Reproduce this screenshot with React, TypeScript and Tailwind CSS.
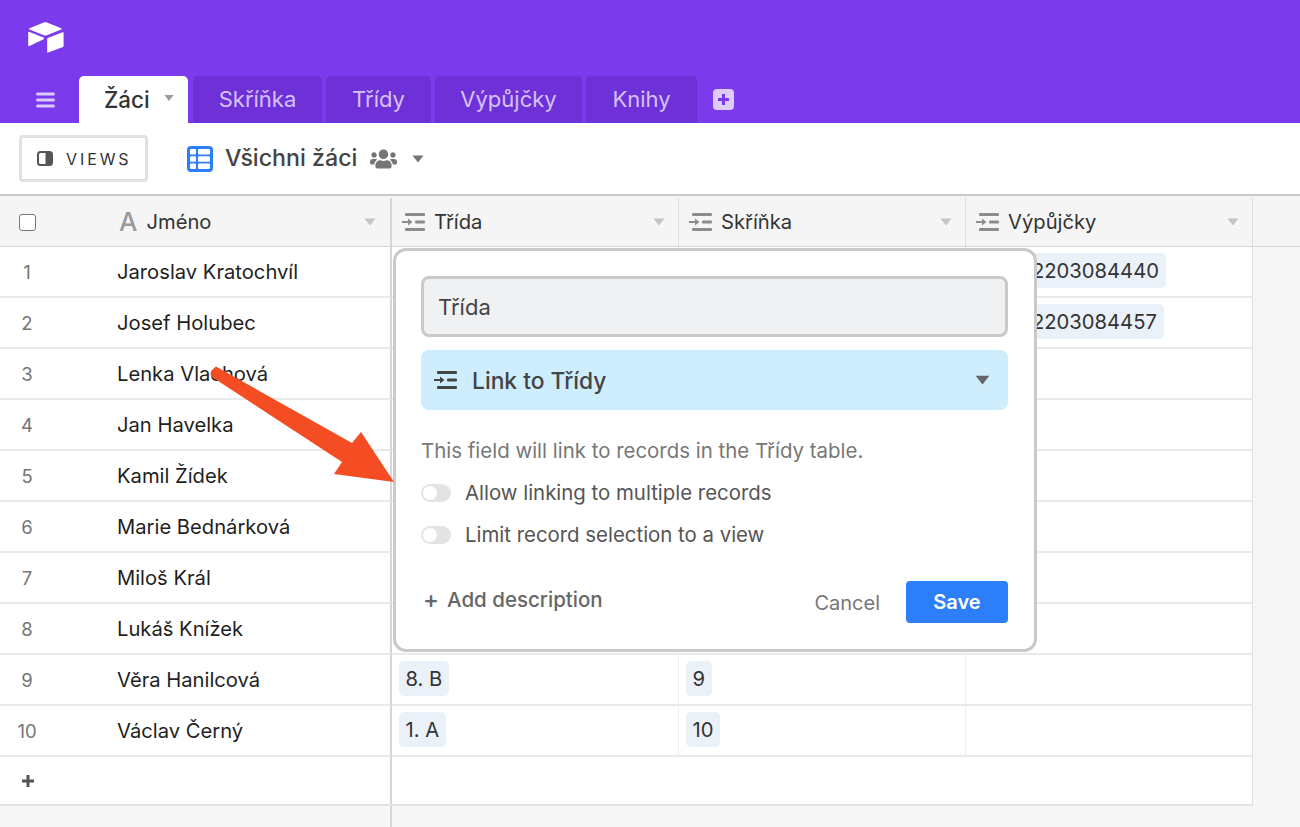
import React from 'react';
import { FaUsers } from 'react-icons/fa';

const students = [
  'Jaroslav Kratochvíl',
  'Josef Holubec',
  'Lenka Vlachová',
  'Jan Havelka',
  'Kamil Žídek',
  'Marie Bednárková',
  'Miloš Král',
  'Lukáš Knížek',
  'Věra Hanilcová',
  'Václav Černý',
];

const classes: Record<number, string> = { 8: '8. B', 9: '1. A' };
const lockers: Record<number, string> = { 8: '9', 9: '10' };
const loans: Record<number, string> = { 0: '2203084440', 1: '2203084457' };

const tabs = [
  { name: 'Skříňka', width: 'w-[129px]' },
  { name: 'Třídy', width: 'w-[105px]' },
  { name: 'Výpůjčky', width: 'w-[147px]' },
  { name: 'Knihy', width: 'w-[111px]' },
];

const Caret = ({ className }: { className: string }) => (
  <svg viewBox="0 0 12 8" className={className} fill="currentColor">
    <path d="M0.5 0.5h11L6 7.5z" />
  </svg>
);

const LinkIcon = ({ className }: { className: string }) => (
  <svg viewBox="0 0 24 20" className={className} fill="currentColor">
    <rect x="3" y="1" width="20" height="3" rx="1" />
    <rect x="3" y="16" width="20" height="3" rx="1" />
    <rect x="13" y="8.5" width="10" height="3" rx="1" />
    <path d="M0 9h6V6.5l4.5 3.5L6 13.500V11H0z" />
  </svg>
);

const HeaderCell = ({ label }: { label: string }) => (
  <div className="w-[287px] shrink-0 flex items-center border-r border-[#dedede] pl-[10px] pr-[13px]">
    <LinkIcon className="w-[24px] h-[20px] text-[#8c8c8c]" />
    <span className="ml-[8px] text-[20.200px] text-[#333333]">{label}</span>
    <Caret className="ml-auto w-[12px] h-[8px] text-[#c4c4c4]" />
  </div>
);

const Chip = ({ text }: { text?: string }) =>
  text ? (
    <span className="h-[35px] mb-[2px] pt-[2px] flex items-center px-[6.500px] rounded-[5px] bg-[#eaf1f8] text-[20.200px] text-[#333333]">
      {text}
    </span>
  ) : null;

const Toggle = ({ label }: { label: string }) => (
  <div className="flex items-center h-[24px]">
    <span className="w-[30px] h-[18px] rounded-full bg-[#e3e3e3] p-[2px] flex">
      <span className="w-[14px] h-[14px] rounded-full bg-white" />
    </span>
    <span className="ml-[14px] text-[20.400px] text-[#555555]">{label}</span>
  </div>
);

export default function App() {
  return (
    <div className="relative w-[1300px] h-[827px] overflow-hidden bg-[#f6f6f6] font-['Inter',sans-serif]">
      {/* Header */}
      <div className="h-[123px] bg-[#7c3aed] flex flex-col justify-between">
        <svg viewBox="0 0 37 31" className="w-[37px] h-[31px] mt-[22px] ml-[27px]" fill="white">
          <path d="M16.700 0.500 2.500 6.300c-.6.3-.6 1.100 0 1.300l14.300 5.600c1 .4 2.100.4 3.100 0l14.300-5.600c.6-.3.6-1 0-1.300L19.900.5c-1-.4-2.200-.4-3.200 0z" />
          <path d="M20.200 16.800v13.200c0 .5.500.8 1 .6l14.800-5.700c.4-.2.600-.5.600-.9V10.800c0-.5-.5-.8-1-.6l-14.800 5.700c-.4.200-.6.500-.6.900z" />
          <path d="M16.500 17.300l-4.400 2.100-.4.200-9.200 4.400c-.6.300-1.300-.1-1.300-.8V10.700c0-.2.100-.4.300-.6.100-.1.200-.2.300-.2.200-.1.500-.1.700 0l14 5.500c.7.300.7 1.500 0 1.900z" />
        </svg>
        <div className="flex items-end h-[47px]">
          <div className="w-[79px] h-[47px] flex items-center pl-[36px]">
            <svg viewBox="0 0 19 16" className="w-[19px] h-[16px]" fill="#dccbfb">
              <rect width="19" height="3" y="0.500" rx="1.500" />
              <rect width="19" height="3" y="6.500" rx="1.500" />
              <rect width="19" height="3" y="12.500" rx="1.500" />
            </svg>
          </div>
          <div className="w-[109px] h-[47px] bg-white rounded-t-[5px] flex items-center pl-[25px]">
            <span className="text-[22.400px] font-medium text-[#333333]">Žáci</span>
            <Caret className="ml-[14px] mb-[4px] w-[10px] h-[8px] text-[#9b9b9b]" />
          </div>
          <div className="flex gap-[4px] ml-[5px]">
            {tabs.map((tab) => (
              <div
                key={tab.name}
                className={`${tab.width} h-[47px] bg-[#6e31d8] rounded-t-[5px] flex items-center justify-center text-[22px] text-[#d5c2f9]`}
              >
                {tab.name}
              </div>
            ))}
          </div>
          <div className="h-[47px] flex items-center ml-[16px]">
            <svg viewBox="0 0 21 21" className="w-[21px] h-[21px]">
              <rect width="21" height="21" rx="4" fill="#dccbfb" />
              <path d="M10.500 5v11M5 10.500h11" stroke="#7c3aed" strokeWidth="3" />
            </svg>
          </div>
        </div>
      </div>

      {/* Toolbar */}
      <div className="h-[73px] bg-white border-b-[2px] border-[#c9c9c9] flex items-center pl-[19px]">
        <div className="w-[129px] h-[47px] border-[3px] border-[#e0e2e2] rounded-[4px] flex items-center pl-[15px]">
          <svg viewBox="0 0 16 15" className="w-[16px] h-[15px]">
            <rect x="1" y="1" width="14" height="13" rx="2.500" fill="none" stroke="#555555" strokeWidth="2" />
            <rect x="8.500" y="1" width="6.500" height="13" rx="1.500" fill="#555555" />
          </svg>
          <span className="ml-[13px] text-[16px] tracking-[2.900px] text-[#333333]">VIEWS</span>
        </div>
        <svg viewBox="0 0 26 26" className="w-[26px] h-[26px] ml-[39px]">
          <rect width="26" height="26" rx="4" fill="#2d7ff9" />
          <rect x="3" y="3" width="6" height="5.500" rx="1" fill="white" />
          <rect x="11" y="3" width="12" height="5.500" rx="1" fill="white" />
          <rect x="3" y="10.250" width="6" height="5.500" rx="1" fill="white" />
          <rect x="11" y="10.250" width="12" height="5.500" rx="1" fill="white" />
          <rect x="3" y="17.500" width="6" height="5.500" rx="1" fill="white" />
          <rect x="11" y="17.500" width="12" height="5.500" rx="1" fill="white" />
        </svg>
        <span className="ml-[12px] text-[23.200px] font-medium text-[#444444]">Všichni žáci</span>
        <FaUsers className="ml-[13px] w-[27px] h-[22px] text-[#757575]" />
        <Caret className="ml-[15px] w-[12px] h-[8px] text-[#757575]" />
      </div>

      {/* Table header */}
      <div className="h-[51px] pt-[2px] flex bg-[#f5f5f5] border-b-[1px] border-[#d6d6d6]">
        <div className="w-[392px] shrink-0 flex items-center border-r-[2px] border-[#d6d6d6] pl-[19px] pr-[14px]">
          <span className="w-[17px] h-[17px] rounded-[3px] border-[1px] border-[#777777] bg-white" />
          <span className="ml-[83px] text-[26px] font-medium text-[#9a9a9a] leading-none">A</span>
          <span className="ml-[9px] text-[20.200px] text-[#333333]">Jméno</span>
          <Caret className="ml-auto w-[12px] h-[8px] text-[#c4c4c4]" />
        </div>
        <HeaderCell label="Třída" />
        <HeaderCell label="Skříňka" />
        <HeaderCell label="Výpůjčky" />
      </div>

      {/* Rows */}
      {students.map((name, i) => (
        <div key={name} className="h-[51px] flex">
          <div className="w-[392px] pt-[2px] shrink-0 flex items-center bg-white border-r-[2px] border-[#d6d6d6] border-b-[2px] border-b-[#e8e9e9]">
            <span className="w-[54px] text-center text-[18.500px] text-[#757575]">{i + 1}</span>
            <span className="ml-[63px] text-[20.200px] text-[#1f1f1f]">{name}</span>
          </div>
          <div className="w-[287px] shrink-0 flex items-center bg-white border-r border-[#eeeeee] border-b-[2px] border-b-[#e8e9e9] pl-[7px]">
            <Chip text={classes[i]} />
          </div>
          <div className="w-[287px] shrink-0 flex items-center bg-white border-r border-[#eeeeee] border-b-[2px] border-b-[#e8e9e9] pl-[7px]">
            <Chip text={lockers[i]} />
          </div>
          <div className="w-[287px] shrink-0 flex items-center bg-white border-r border-[#dedede] border-b-[2px] border-b-[#e8e9e9] pl-[6px]">
            {loans[i] && (
              <span className="h-[35px] mb-[2px] pt-[2px] flex items-center pl-[60px] pr-[7px] rounded-[5px] bg-[#eaf1f8] text-[20.200px] text-[#333333]">
                {loans[i]}
              </span>
            )}
          </div>
        </div>
      ))}

      {/* Add row */}
      <div className="h-[49px] w-[1253px] flex bg-white border-b-[2px] border-[#e3e3e3] border-r border-r-[#dedede]">
        <div className="w-[392px] shrink-0 flex items-center border-r-[2px] border-[#d6d6d6] pl-[21px]">
          <svg viewBox="0 0 14 14" className="w-[14px] h-[14px]">
            <path d="M7 1v12M1 7h12" stroke="#555555" strokeWidth="3" />
          </svg>
        </div>
      </div>
      <div className="h-[22px] w-[392px] border-r-[2px] border-[#d6d6d6]" />

      {/* Field editor */}
      <div className="absolute left-[393px] top-[248px] w-[644px] h-[404px] bg-white border-[3px] border-[#c9c9c9] rounded-[13px] pt-[25px] pl-[25px] pr-[26px]">
        <div className="h-[61px] pt-[2px] rounded-[8px] border-[3px] border-[#c9c9c9] bg-[#f0f1f3] flex items-center pl-[14px] text-[22px] text-[#444444]">
          Třída
        </div>
        <div className="mt-[13px] h-[60px] rounded-[8px] bg-[#cfeefd] flex items-center pl-[13px] pr-[18px]">
          <LinkIcon className="w-[24px] h-[20px] text-[#444444]" />
          <span className="ml-[14px] pt-[2px] text-[22.800px] font-medium text-[#444444]">Link to Třídy</span>
          <Caret className="ml-auto w-[15px] h-[10px] text-[#666666]" />
        </div>
        <p className="mt-[27px] text-[20.450px] leading-[27px] text-[#777777]">
          This field will link to records in the Třídy table.
        </p>
        <div className="mt-[17px] flex flex-col gap-[18px]">
          <Toggle label="Allow linking to multiple records" />
          <Toggle label="Limit record selection to a view" />
        </div>
        <div className="mt-[34px] flex items-center">
          <span className="ml-[2px] text-[24px] font-medium text-[#666666] leading-none mb-[4px]">+</span>
          <span className="ml-[8px] mb-[4px] text-[20.500px] font-medium text-[#666666]">Add description</span>
          <span className="ml-auto pt-[2px] text-[20px] text-[#777777]">Cancel</span>
          <span className="ml-[26px] w-[102px] h-[42px] rounded-[4px] bg-[#2d7ff9] flex items-center justify-center text-[20px] font-semibold text-white">
            Save
          </span>
        </div>
      </div>

      {/* Arrow */}
      <svg viewBox="0 0 1300 827" className="absolute inset-0 w-[1300px] h-[827px] pointer-events-none">
        <path
          d="M216 366.500 L352 443 L361 432 L394 482 L334 474 L342 462 L212 377 Q209 374 212 370 Z"
          fill="#f54d23"
        />
      </svg>
    </div>
  );
}
